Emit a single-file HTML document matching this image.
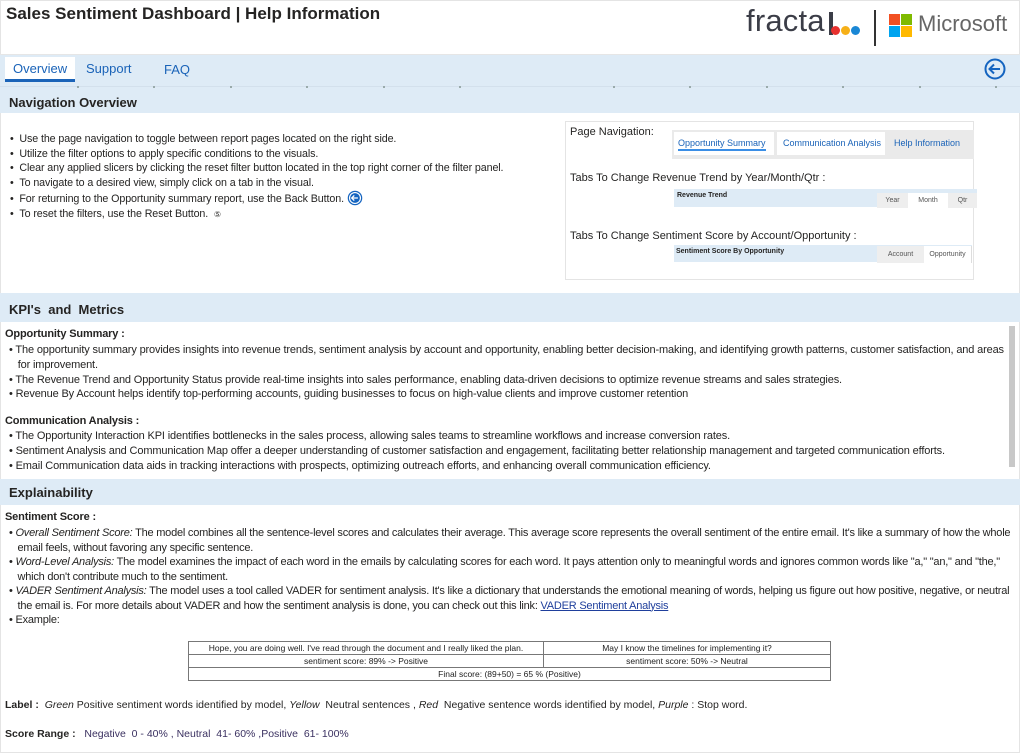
<!DOCTYPE html>
<html><head><meta charset="utf-8"><style>
*{margin:0;padding:0;box-sizing:border-box}
body{width:1020px;height:753px;overflow:hidden;background:#fff;font-family:"Liberation Sans",sans-serif;color:#252423;position:relative}
.a{position:absolute;white-space:nowrap}
.band{position:absolute;left:0;width:1020px;background:#deebf6}
.h{position:absolute;font-weight:bold;font-size:13px;color:#252423}
.b{font-size:10.7px;letter-spacing:-0.1px;color:#252423}
.k{font-size:11px;color:#252423;letter-spacing:-0.15px}
.dot{position:absolute;top:86px;width:2px;height:2px;background:#9aa}
i{font-style:italic}
table{border-collapse:collapse;font-size:8.5px;color:#222}
td{border:1px solid #777;text-align:center;height:13px;padding:0 2px}
</style></head><body>
<div style="position:absolute;left:0;top:0;width:1020px;height:753px;border:1px solid #e4e4e4"></div>
<div class="a" style="left:6px;top:4px;font-size:17px;font-weight:bold;color:#252423">Sales Sentiment Dashboard | Help Information</div>
<!-- logos -->
<div class="a" style="left:746px;top:3px;font-size:31px;color:#3b3d47;letter-spacing:0.2px">fracta</div>
<div class="a" style="left:829px;top:12px;width:4px;height:23px;background:#3b3d47"></div>
<div class="a" style="left:831px;top:26px;width:9px;height:9px;border-radius:50%;background:#e8312f"></div>
<div class="a" style="left:841px;top:26px;width:9px;height:9px;border-radius:50%;background:#f6b018"></div>
<div class="a" style="left:851px;top:26px;width:9px;height:9px;border-radius:50%;background:#1a87d5"></div>
<div class="a" style="left:874px;top:10px;width:2px;height:36px;background:#333"></div>
<div class="a" style="left:889px;top:14px;width:11px;height:11px;background:#f25022"></div>
<div class="a" style="left:901px;top:14px;width:11px;height:11px;background:#7fba00"></div>
<div class="a" style="left:889px;top:26px;width:11px;height:11px;background:#00a4ef"></div>
<div class="a" style="left:901px;top:26px;width:11px;height:11px;background:#ffb900"></div>
<div class="a" style="left:918px;top:11px;font-size:22px;color:#666">Microsoft</div>

<div class="band" style="top:54px;height:59px;border-top:1px solid #e6e6e6"></div>
<div class="a" style="left:5px;top:57px;width:70px;height:25px;background:#fff;border-bottom:3px solid #1a63b8"></div>
<div class="a" style="left:13px;top:61px;font-size:13px;color:#1a63b8">Overview</div>
<div class="a" style="left:86px;top:61px;font-size:13px;color:#1a63b8">Support</div>
<div class="a" style="left:164px;top:62px;font-size:13px;color:#1a63b8">FAQ</div>
<div class="a" style="left:0;top:86px;width:1020px;height:1px;background:#d3e0ec"></div>
<div class="dot" style="left:77px"></div><div class="dot" style="left:153px"></div><div class="dot" style="left:230px"></div><div class="dot" style="left:306px"></div><div class="dot" style="left:383px"></div><div class="dot" style="left:459px"></div><div class="dot" style="left:613px"></div><div class="dot" style="left:689px"></div><div class="dot" style="left:766px"></div><div class="dot" style="left:842px"></div><div class="dot" style="left:919px"></div><div class="dot" style="left:995px"></div>
<svg class="a" style="left:984px;top:58px" width="22" height="22" viewBox="0 0 22 22"><circle cx="11" cy="11" r="9.5" fill="none" stroke="#1464c0" stroke-width="2"/><path d="M16 11H6M10 6.5L5.5 11L10 15.5" fill="none" stroke="#1464c0" stroke-width="2"/></svg>
<div class="h" style="left:9px;top:95px">Navigation Overview</div>

<div class="a b" style="left:10px;top:132px;line-height:14.6px">
• &nbsp;Use the page navigation to toggle between report pages located on the right side.<br>
• &nbsp;Utilize the filter options to apply specific conditions to the visuals.<br>
• &nbsp;Clear any applied slicers by clicking the reset filter button located in the top right corner of the filter panel.<br>
• &nbsp;To navigate to a desired view, simply click on a tab in the visual.<br>
• &nbsp;For returning to the Opportunity summary report, use the Back Button. <svg width="16" height="16" viewBox="0 0 22 22" style="vertical-align:-4px"><circle cx="11" cy="11" r="10" fill="#1464c0"/><circle cx="11" cy="11" r="7.5" fill="none" stroke="#fff" stroke-width="1.6"/><path d="M15 11H7M10 7.5L6.5 11L10 14.5" fill="none" stroke="#fff" stroke-width="1.8"/></svg><br>
• &nbsp;To reset the filters, use the Reset Button. &nbsp;<span style="font-size:8px">⑤</span></div>

<div class="a" style="left:565px;top:121px;width:409px;height:159px;border:1px solid #e4e4e4"></div>
<div class="a" style="left:570px;top:126px;font-size:11px;color:#252423">Page Navigation:</div>
<div class="a" style="left:672px;top:130px;width:302px;height:29px;background:#eaeaea"></div>
<div class="a" style="left:674px;top:132px;width:100px;height:23px;background:#fff"></div>
<div class="a" style="left:678px;top:138px;font-size:9px;color:#1a63b8;border-bottom:2px solid #3a8ee6;padding-bottom:1px">Opportunity Summary</div>
<div class="a" style="left:777px;top:132px;width:108px;height:23px;background:#fff"></div>
<div class="a" style="left:783px;top:138px;font-size:9px;color:#1a63b8">Communication Analysis</div>
<div class="a" style="left:894px;top:138px;font-size:9px;color:#1a63b8">Help Information</div>
<div class="a" style="left:570px;top:172px;font-size:11px;color:#252423">Tabs To Change Revenue Trend by Year/Month/Qtr :</div>
<div class="a" style="left:674px;top:189px;width:303px;height:18px;background:#deebf6"></div>
<div class="a" style="left:677px;top:192px;font-size:7px;font-weight:bold">Revenue Trend</div>
<div class="a" style="left:877px;top:193px;width:31px;height:15px;background:#eee;font-size:7px;color:#555;text-align:center;line-height:15px">Year</div>
<div class="a" style="left:908px;top:193px;width:40px;height:15px;background:#fff;font-size:7px;color:#555;text-align:center;line-height:15px">Month</div>
<div class="a" style="left:948px;top:193px;width:29px;height:15px;background:#eee;font-size:7px;color:#555;text-align:center;line-height:15px">Qtr</div>
<div class="a" style="left:570px;top:230px;font-size:11px;color:#252423">Tabs To Change Sentiment Score by Account/Opportunity :</div>
<div class="a" style="left:674px;top:245px;width:298px;height:17px;background:#deebf6"></div>
<div class="a" style="left:676px;top:248px;font-size:7px;font-weight:bold">Sentiment Score By Opportunity</div>
<div class="a" style="left:877px;top:246px;width:47px;height:17px;background:#eee;font-size:7px;color:#555;text-align:center;line-height:17px">Account</div>
<div class="a" style="left:924px;top:246px;width:48px;height:17px;background:#fff;font-size:7px;color:#555;text-align:center;line-height:17px;border-right:1px solid #ddd">Opportunity</div>

<div class="band" style="top:293px;height:29px"></div>
<div class="h" style="left:9px;top:302px">KPI's &nbsp;and &nbsp;Metrics</div>
<div class="a" style="left:1009px;top:326px;width:6px;height:141px;background:#c8c8c8"></div>
<div class="a k" style="left:5px;top:328px;font-weight:bold">Opportunity Summary :</div>
<div class="a k" style="left:9px;top:343px;line-height:14.8px">• The opportunity summary provides insights into revenue trends, sentiment analysis by account and opportunity, enabling better decision-making, and identifying growth patterns, customer satisfaction, and areas<br>
&nbsp;&nbsp; for improvement.<br>
• The Revenue Trend and Opportunity Status provide real-time insights into sales performance, enabling data-driven decisions to optimize revenue streams and sales strategies.<br>
• Revenue By Account helps identify top-performing accounts, guiding businesses to focus on high-value clients and improve customer retention</div>
<div class="a k" style="left:5px;top:415px;font-weight:bold">Communication Analysis :</div>
<div class="a k" style="left:9px;top:429px;line-height:14.8px">• The Opportunity Interaction KPI identifies bottlenecks in the sales process, allowing sales teams to streamline workflows and increase conversion rates.<br>
• Sentiment Analysis and Communication Map offer a deeper understanding of customer satisfaction and engagement, facilitating better relationship management and targeted communication efforts.<br>
• Email Communication data aids in tracking interactions with prospects, optimizing outreach efforts, and enhancing overall communication efficiency.</div>

<div class="band" style="top:479px;height:26px"></div>
<div class="h" style="left:9px;top:485px">Explainability</div>
<div class="a k" style="left:5px;top:511px;font-weight:bold">Sentiment Score :</div>
<div class="a k" style="left:9px;top:526px;line-height:14.5px;letter-spacing:-0.22px">• <i>Overall Sentiment Score:</i> The model combines all the sentence-level scores and calculates their average. This average score represents the overall sentiment of the entire email. It's like a summary of how the whole<br>
&nbsp;&nbsp; email feels, without favoring any specific sentence.<br>
• <i>Word-Level Analysis:</i> The model examines the impact of each word in the emails by calculating scores for each word. It pays attention only to meaningful words and ignores common words like "a," "an," and "the,"<br>
&nbsp;&nbsp; which don't contribute much to the sentiment.<br>
• <i>VADER Sentiment Analysis:</i> The model uses a tool called VADER for sentiment analysis. It's like a dictionary that understands the emotional meaning of words, helping us figure out how positive, negative, or neutral<br>
&nbsp;&nbsp; the email is. For more details about VADER and how the sentiment analysis is done, you can check out this link: <span style="color:#1f3f9c;text-decoration:underline">VADER Sentiment Analysis</span><br>
• Example:</div>

<table class="a" style="left:188px;top:641px;width:643px">
<tr><td style="width:355px">Hope, you are doing well. I've read through the document and I really liked the plan.</td><td>May I know the timelines for implementing it?</td></tr>
<tr><td>sentiment score: 89% -&gt; Positive</td><td>sentiment score: 50% -&gt; Neutral</td></tr>
<tr><td colspan="2">Final score: (89+50) = 65 % (Positive)</td></tr>
</table>

<div class="a" style="left:5px;top:699px;font-size:10.5px"><b>Label :</b> &nbsp;<i>Green</i> Positive sentiment words identified by model, <i>Yellow</i> &nbsp;Neutral sentences , <i>Red</i> &nbsp;Negative sentence words identified by model, <i>Purple</i> : Stop word.</div>
<div class="a" style="left:5px;top:728px;font-size:10.5px"><b>Score Range :</b> &nbsp;&nbsp;<span style="color:#3a3060">Negative &nbsp;0 - 40% , Neutral &nbsp;41- 60% ,Positive &nbsp;61- 100%</span></div>
</body></html>
